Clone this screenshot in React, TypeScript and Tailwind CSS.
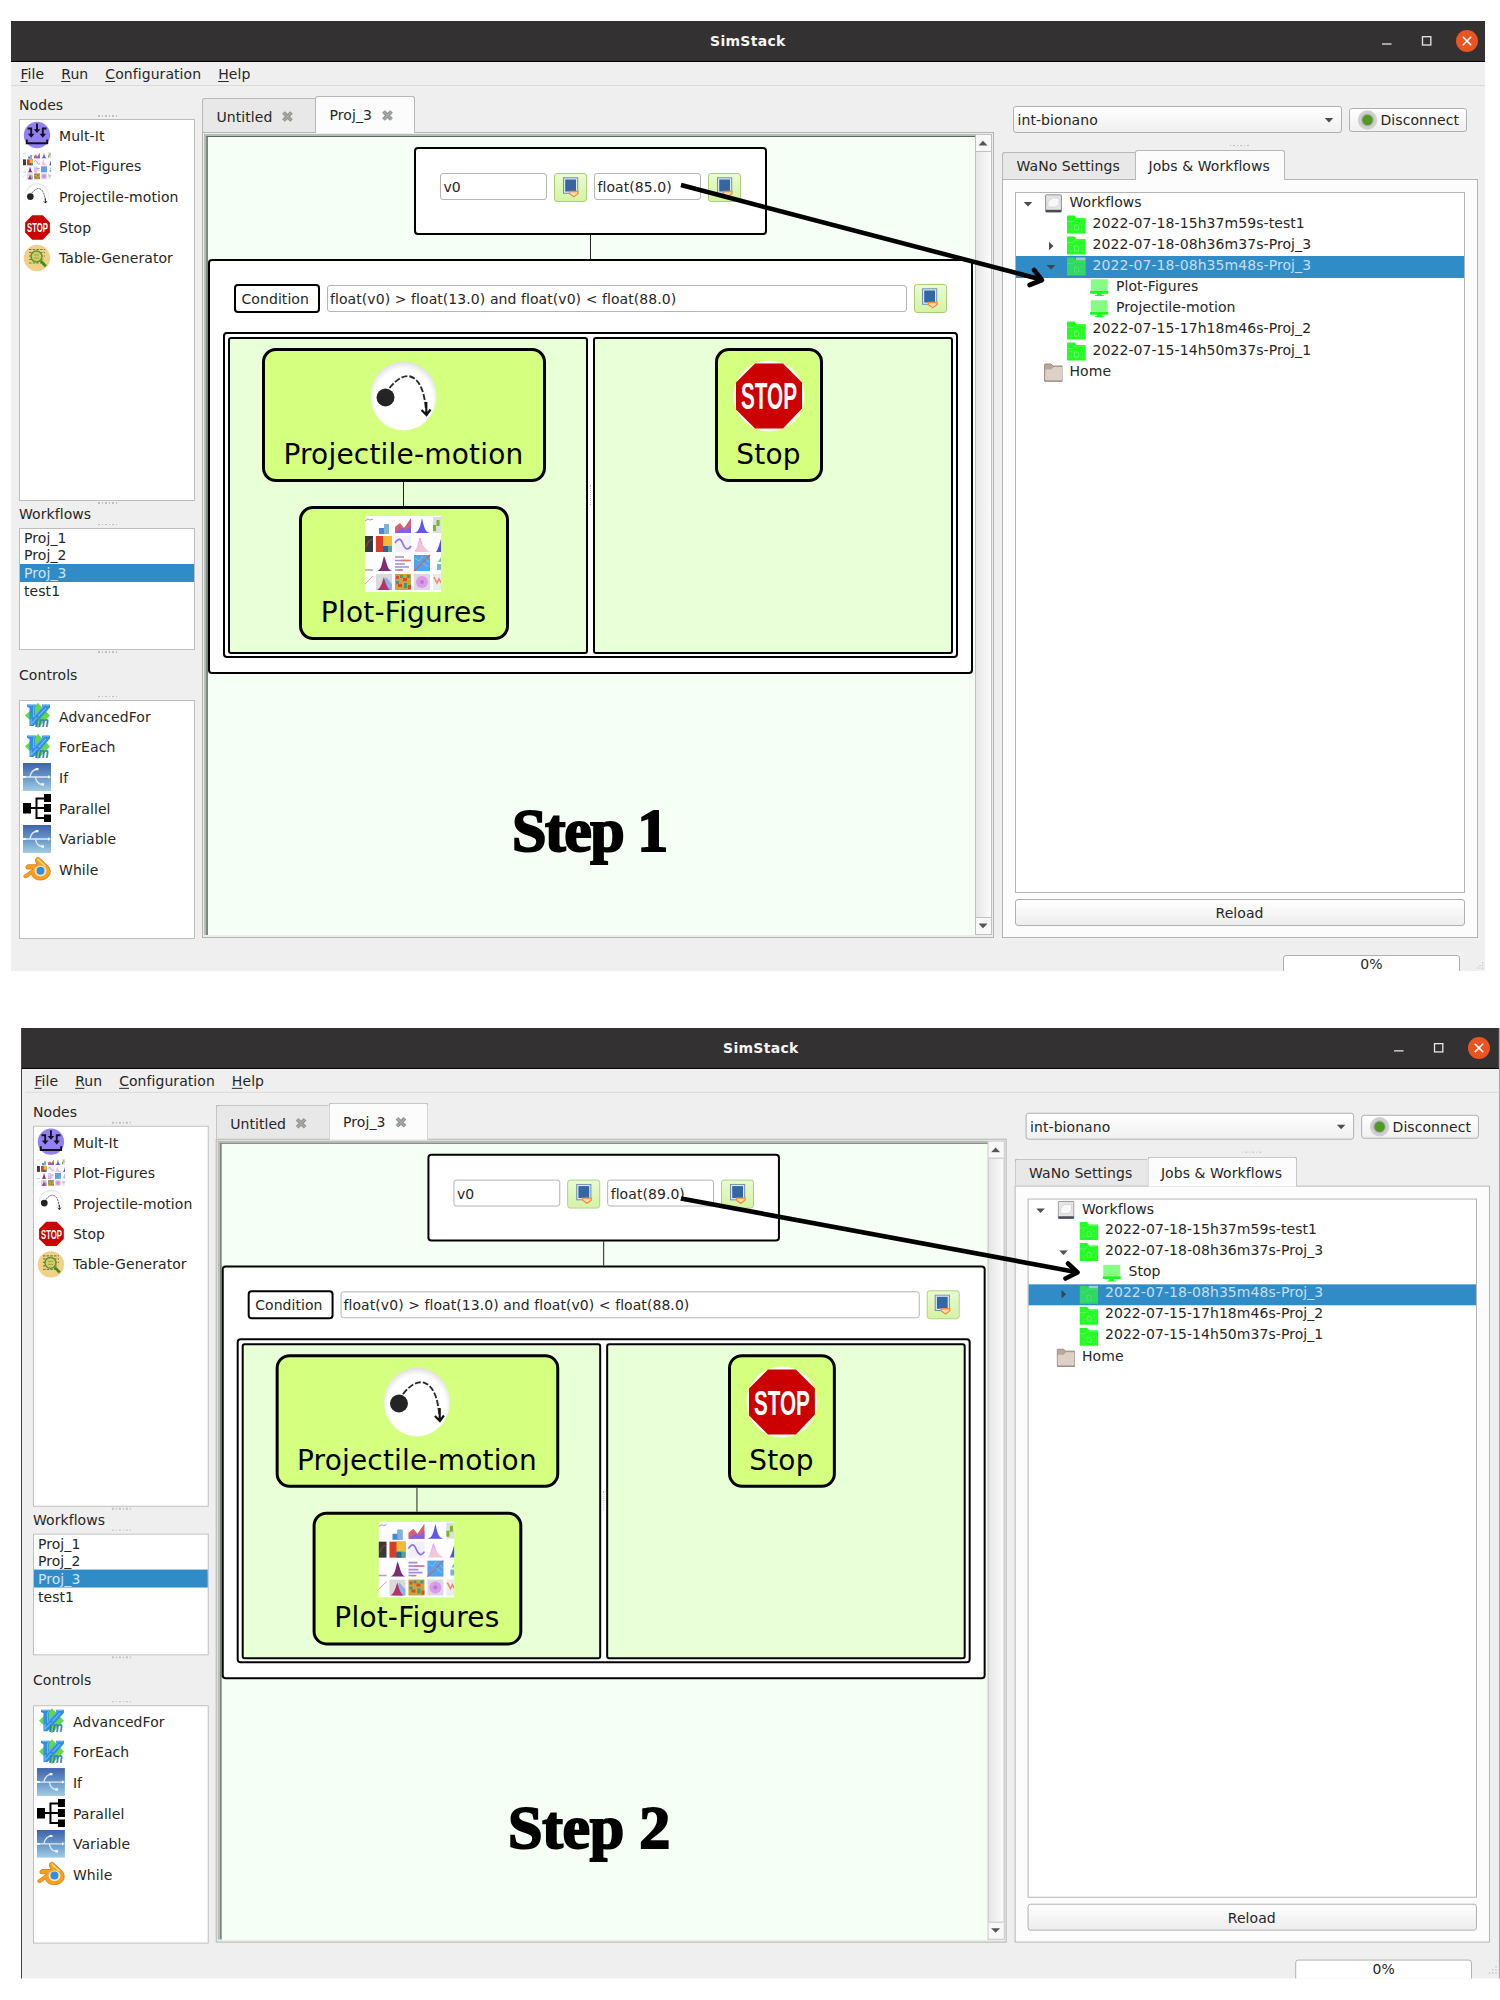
import React from "react";

/* ---------- icons ---------- */

function MultItIcon() {
  return (
    <svg className="size-[28px]" viewBox="0 0 28 28" fill="none">
      <circle cx="14" cy="14" r="13.2" fill="#9381f4" />
      <path d="M14 2.500V9M8.200 14V7.500H4.500M19.800 14V7.500H23.500" stroke="#15121f" strokeWidth="1.900" />
      <path d="M10.700 8.200h6.600L14 12zM4.900 12.800h6.600L8.200 16.800zM16.500 12.800h6.600l-3.300 4z" fill="#15121f" />
      <path d="M3.800 18.500V22.300H24.200V18.500" stroke="#15121f" strokeWidth="2" />
    </svg>
  );
}

function PlotIcon({ className }: { className: string }) {
  return (
    <svg className={className} viewBox="0 0 76 76">
      <rect width="76" height="76" fill="#fdfdff" />
      <path d="M0 5l3-2 2 1 3-1" stroke="#9aa0b0" fill="none" />
      <path d="M14 18V12h5V8h5v10z" fill="#4a87d8" />
      <path d="M19 8h5v10h-5z" fill="#7fb2df" />
      <path d="M30 17v-6l5-4 4 5 7-10v15z" fill="#d8606e" />
      <path d="M30 17l7-5 4 2 5-5v8z" fill="#7c62ee" />
      <path d="M49 17c5-1 6-6 8-15 2 9 3 14 8 15z" fill="#5f58ee" />
      <rect x="68" y="1" width="8" height="16" fill="#dcdedc" />
      <path d="M68 9h3v6h-3zM71.500 4h3v6h-3z" fill="#76b62c" />
      <rect y="20" width="8" height="16" fill="#3a3838" />
      <path d="M1 31l3-6 4-2" stroke="#a04040" fill="none" />
      <rect x="11" y="20" width="16" height="16" fill="#d83c28" />
      <rect x="18" y="20" width="9" height="11" fill="#efba36" />
      <rect x="18" y="30" width="5" height="6" fill="#1b6c94" />
      <rect x="23" y="30" width="4" height="6" fill="#55a58a" />
      <rect x="30" y="20" width="16" height="16" fill="#f1f1f9" />
      <path d="M30 27c4-6 6-4 8 1s5 7 8 2" stroke="#9474e4" strokeWidth="1.700" fill="none" />
      <path d="M49 36c4-1 4-6 6-14 2 6 4 10 10 14z" fill="#f4c5d8" />
      <path d="M50 35c3-2 3-7 5-13l2 6" stroke="#e9a0f0" fill="none" />
      <path d="M71 36c2-2 3-7 5-13v13z" fill="#4d52dc" />
      <path d="M0 54h8" stroke="#a5a9a9" strokeWidth="1.500" />
      <path d="M12 55c5-1 5-9 7-15 3 6 3 14 8 15z" fill="#7e2d72" />
      <path d="M30 41h9M30 44.500h16M30 48h10M30 51h14M30 54h7" stroke="#a68bd8" strokeWidth="1.600" />
      <path d="M36 44.500h8M33 54h5" stroke="#d77" strokeWidth="1.300" />
      <rect x="49" y="39" width="16" height="16" fill="#52a3ec" />
      <path d="M50 42l4 3 4-5M52 52l5-6 6 5M60 42l4 4" stroke="#7cc3f4" fill="none" />
      <path d="M49 55l16-16" stroke="#b86a70" strokeWidth="1.200" />
      <path d="M72 48h4v6h-4z" fill="#7bb4cc" />
      <path d="M73 46l3-5v5z" fill="#6fcf90" />
      <path d="M0 68l8-8" stroke="#ec9aa8" fill="none" />
      <rect x="11" y="58" width="16" height="16" fill="#dadada" />
      <path d="M15 74l6-13 6 7v6z" fill="#8fb2e8" />
      <path d="M12 74c5-3 5-9 7-13 1 5 3 11 6 13z" fill="#b23468" />
      <rect x="30" y="58" width="16" height="16" fill="#c9a53c" />
      <path d="M31 60h3v3h-3zM38 62h4v3h-4zM33 68h4v3h-4zM43 69h3v4h-3z" fill="#dd4a2a" />
      <path d="M35 59h3v3h-3zM42 59h3v3h-3zM31 65h3v3h-3zM39 67h3v5h-3z" fill="#3a9a8a" />
      <rect x="49" y="58" width="16" height="16" fill="#ddd8e0" />
      <circle cx="57" cy="66" r="6" fill="#dc98ec" />
      <circle cx="57" cy="66" r="2" fill="#b77cc4" />
      <rect x="68" y="58" width="8" height="16" fill="#ececec" />
      <path d="M69 61l3 6 2-4 2 4" stroke="#ee8870" strokeWidth="1.500" fill="none" />
    </svg>
  );
}

function ProjectileIcon({ className }: { className: string }) {
  return (
    <svg className={className} viewBox="0 0 66 70" fill="none">
      <defs>
        <radialGradient id="disc" cx=".5" cy=".55" r=".55">
          <stop offset=".8" stopColor="#fff" />
          <stop offset="1" stopColor="#dedede" />
        </radialGradient>
      </defs>
      <ellipse cx="33" cy="35" rx="33" ry="34.500" fill="url(#disc)" />
      <circle cx="15" cy="36.500" r="9" fill="#242424" />
      <path d="M19 27C27 17 34 14 40 15.500C50 19 54 32 55.500 49" stroke="#2b2b2b" strokeWidth="1.900" strokeDasharray="6 2" />
      <path d="M55.800 41v13M51 49l5 5 4-5.500" stroke="#141414" strokeWidth="2.200" />
    </svg>
  );
}

function StopIcon({ className }: { className: string }) {
  return (
    <svg className={"overflow-visible " + className} viewBox="0 0 72 72">
      <circle cx="36" cy="36" r="35.500" fill="#fbfbf6" />
      <path d="M22 3.500h28l19 19v26L50 68.500H22L3 49.500V22.500z" fill="#cc0000" />
      <text x="8" y="49" fontSize="36" fontWeight="700" letterSpacing="0" fontFamily="'Liberation Sans', sans-serif" fill="#fff" textLength="56" lengthAdjust="spacingAndGlyphs">
        STOP
      </text>
    </svg>
  );
}

function TableIcon() {
  return (
    <svg className="size-[28px]" viewBox="0 0 28 28" fill="none">
      <circle cx="14" cy="14" r="13.200" fill="#f0d287" />
      <path d="M6 5.500h16M6 8.500h16M6 12h16M6 15.500h15M6 19h12" stroke="#7b7848" strokeWidth="1.200" strokeDasharray="2.500 1.200" />
      <circle cx="13.500" cy="12.500" r="5.500" fill="#cdd06a" stroke="#5e962c" strokeWidth="1.500" />
      <path d="M11 11h5M11 14h5" stroke="#a79d40" />
      <path d="M17.800 17l5 5.200" stroke="#3f8a22" strokeWidth="2.800" />
    </svg>
  );
}

function VimIcon() {
  return (
    <svg className="size-[28px]" viewBox="0 0 28 28">
      <path d="M15 1l12 12.500L15 26 2 13.500z" fill="#63d94a" />
      <path d="M4 2.500h9v2l-1.200.8V13L19 5.300V2.500h8v3L10.500 24H6.500V6L4 4.800z" fill="#2f8fe4" />
      <path d="M5 3.200h7v1l-1.500 1v10L20 5V3.200h6" stroke="#7cc0f5" fill="none" strokeWidth=".8" />
      <path d="M8 17v5l3-3L23 6" stroke="#6cbaf4" fill="none" strokeWidth="1.200" />
      <text x="12" y="24.500" fontSize="14" fontWeight="700" fontStyle="italic" fontFamily="'Liberation Sans', sans-serif" fill="#3d7fb4" textLength="14" lengthAdjust="spacingAndGlyphs">
        im
      </text>
    </svg>
  );
}

function UsbIcon() {
  return (
    <svg className="size-[28px]" viewBox="0 0 28 28" fill="none">
      <defs>
        <linearGradient id="usb" x1="0" y1="0" x2="0" y2="1">
          <stop offset="0" stopColor="#3f63ab" />
          <stop offset=".55" stopColor="#6d9ccb" />
          <stop offset="1" stopColor="#a3cbe4" />
        </linearGradient>
      </defs>
      <rect width="28" height="28" fill="url(#usb)" />
      <path d="M0 14h26M7 13.500C8 9 10 6.500 14.500 6M12.500 14.500c1 5 3 7 7 7" stroke="#dfe9f4" strokeWidth="1.300" />
      <path d="M25 12.200l3 1.800-3 1.800zM0 13h3v2H0zM12.500 5h3v2.200h-3zM18.500 20.200h2.500v2.500h-2.500z" fill="#f1f6fa" />
    </svg>
  );
}

function ParallelIcon() {
  return (
    <svg className="size-[28px]" viewBox="0 0 28 28" fill="none">
      <path d="M4 14h18M22 4.500H13.500V24H22" stroke="#000" strokeWidth="2" />
      <path d="M0 9h8v10.500H0zM21 0h7.500v8H21zM21 10h7.500v8H21zM21 20.500h7.500v8H21z" fill="#000" />
    </svg>
  );
}

function BlenderIcon() {
  return (
    <svg className="size-[28px]" viewBox="0 0 28 28" fill="none">
      <path d="M1 20.500L10 14H3.500c-1.500-2 0-4 1.500-4.300H14L12.500 6c-.5-3 2-4.500 4-3l8.500 8c4.500 5 2.500 13-7 14-6 0-8.500-2.500-9.500-6L4 22.500C2 23.500 0 22 1 20.500z" fill="#f5a01e" stroke="#d47c10" strokeWidth=".8" />
      <path d="M14.500 4l8 7.500" stroke="#fddc8c" strokeWidth="1.500" />
      <ellipse cx="17.500" cy="16" rx="6" ry="5.400" fill="#fbe3b8" />
      <circle cx="17.500" cy="15.800" r="4" fill="#2f8fe0" />
    </svg>
  );
}

function CloseX() {
  return (
    <svg className="size-[13px]" viewBox="0 0 13 13">
      <path d="M2.500 2.500l8 8M10.500 2.500l-8 8" stroke="#8f928d" strokeWidth="3.800" />
      <path d="M3 3l7 7M10 3l-7 7" stroke="#a9aca7" strokeWidth="1.200" strokeLinecap="round" />
    </svg>
  );
}

function DiskIcon() {
  return (
    <svg className="h-[19px] w-[17px]" viewBox="0 0 17 19">
      <rect x=".6" y=".8" width="15.800" height="17" rx="1" fill="#e4e4e4" stroke="#8f8f8f" strokeWidth="1" />
      <path d="M3 13V8l4-4h7v6l-3 3z" fill="#f8f8f8" stroke="#cfcfcf" strokeWidth=".7" />
      <path d="M.8 15.800h15.500v2.500H.8z" fill="#4b4b58" />
    </svg>
  );
}

function GreenFolder({ dim }: { dim?: boolean }) {
  return (
    <svg className="h-[19px] w-[19px]" viewBox="0 0 19 19" fill="none">
      {dim && <path d="M9 .5h9.500v3H9z" fill="#9fc6e2" />}
      <path d="M0 1.500Q0 .5 1 .5h6.500L9.500 3H18q.7 0 .7.800V18.500H0z" fill={dim ? "#2fd860" : "#25fb25"} />
      <path d="M.5 6.500H6l2.500-2.500H18" stroke={dim ? "#4cdc74" : "#5cff5c"} strokeWidth=".9" />
      <path d="M7.500 10h3l1.200 1.600V15H7.500zM4 8.500v1M14.500 9v1M3.500 15h1M14.500 15h1" stroke={dim ? "#5ce083" : "#7dff7d"} strokeWidth=".8" />
    </svg>
  );
}

function HomeFolder() {
  return (
    <svg className="h-[19px] w-[19px]" viewBox="0 0 19 19">
      <path d="M.6 18V1.800Q.6 1 1.500 1H7l2 2h9v15z" fill="#bca79a" stroke="#99887d" strokeWidth="1" />
      <path d="M1.200 6.500h6L9.500 4H18v13.500H1.200z" fill="#ddd1c7" />
      <path d="M.6 18.200h17.800" stroke="#99887d" />
    </svg>
  );
}

function ScreenIcon() {
  return (
    <svg className="h-[18px] w-[18.500px]" viewBox="0 0 19 18">
      <rect x=".8" width="17.400" height="12" fill="#84ff84" />
      <path d="M.2 12h18.600v2.800H.2zM7 14.800h5v1.500h2v1H5v-1h2z" fill="#1cf81c" />
    </svg>
  );
}

function Arrow({ open }: { open: boolean }) {
  return (
    <svg className="size-[10px]" viewBox="0 0 10 10">
      {open ? <path d="M.7 3h8.600L5 7.600z" fill="#3b3b3b" fillOpacity=".9" /> : <path d="M3 .7v8.600L7.500 5z" fill="#3b3b3b" fillOpacity=".9" />}
    </svg>
  );
}

function PickButton() {
  return (
    <div className="flex h-[29px] w-[33px] shrink-0 items-center justify-center rounded-[3px] border border-[#a9cf7c] bg-linear-to-b from-[#e9fbd0] to-[#d3f4a2]">
      <svg className="h-[21px] w-[18px]" viewBox="0 0 18 21">
        <rect x="1.500" y=".8" width="14.200" height="15.500" fill="#dfe9f0" stroke="#6f8fb4" />
        <rect x="3.200" y="2.500" width="10.800" height="12" fill="#3465a4" />
        <path d="M7.500 14.500h8.500v2.200L11.800 19.800 7.500 16.700z" fill="#fbd9b0" stroke="#f08f3c" strokeWidth="1.300" />
      </svg>
    </div>
  );
}

function Dots() {
  return (
    <div className="flex gap-[2px]">
      {[0, 1, 2, 3, 4, 5].map((i) => (
        <span key={i} className="size-[1.500px] bg-[#c0c0c0]" />
      ))}
    </div>
  );
}

/* ---------- left column ---------- */

const nodes = [
  { label: "Mult-It", icon: <MultItIcon /> },
  { label: "Plot-Figures", icon: <PlotIcon className="size-[28px]" /> },
  { label: "Projectile-motion", icon: <ProjectileIcon className="h-[26px] w-[26px]" /> },
  { label: "Stop", icon: <StopIcon className="size-[27px]" /> },
  { label: "Table-Generator", icon: <TableIcon /> },
];

const controls = [
  { label: "AdvancedFor", icon: <VimIcon /> },
  { label: "ForEach", icon: <VimIcon /> },
  { label: "If", icon: <UsbIcon /> },
  { label: "Parallel", icon: <ParallelIcon /> },
  { label: "Variable", icon: <UsbIcon /> },
  { label: "While", icon: <BlenderIcon /> },
];

function IconList({ items }: { items: { label: string; icon: React.ReactNode }[] }) {
  return (
    <>
      {items.map((it) => (
        <div key={it.label} className="flex h-[30.600px] items-center pl-[3px]">
          <span className="flex w-[28px] justify-center">{it.icon}</span>
          <span className="pt-px pl-[8px]">{it.label}</span>
        </div>
      ))}
    </>
  );
}

function LeftColumn() {
  return (
    <div className="ml-[8px] flex w-[176px] shrink-0 flex-col">
      <div className="flex h-[33px] flex-col">
        <div className="flex h-[29px] items-center pt-[9px]">Nodes</div>
        <div className="ml-[79px]">
          <Dots />
        </div>
      </div>
      <div className="h-[382px] border border-[#bdbdbd] bg-white">
        <IconList items={nodes} />
      </div>
      <div className="flex h-[27px] flex-col justify-between pt-px pb-[3px]">
        <div className="ml-[79px]">
          <Dots />
        </div>
        <div>Workflows</div>
        <div className="ml-[79px]">
          <Dots />
        </div>
      </div>
      <div className="h-[122px] border border-[#bdbdbd] bg-white">
        {["Proj_1", "Proj_2", "Proj_3", "test1"].map((w) => (
          <div key={w} className={"flex h-[17.600px] items-center pl-[4px] " + (w === "Proj_3" ? "bg-[#308cc6] text-[#cfe4f2]" : "")}>
            {w}
          </div>
        ))}
      </div>
      <div className="flex h-[50px] flex-col justify-between pt-px pb-[3px]">
        <div className="ml-[79px]">
          <Dots />
        </div>
        <div className="pt-[2px]">Controls</div>
        <div className="ml-[79px]">
          <Dots />
        </div>
      </div>
      <div className="h-[239px] border border-[#bdbdbd] bg-white">
        <IconList items={controls} />
      </div>
    </div>
  );
}

/* ---------- workflow editor ---------- */

function Field({ text, className }: { text: string; className: string }) {
  return <div className={"flex h-[27px] shrink-0 items-center rounded-[3px] border border-[#b4b4b4] bg-white pl-[2.500px] " + className}>{text}</div>;
}

function Card({ label, icon, className }: { label: string; icon: React.ReactNode; className: string }) {
  return (
    <div className={"flex h-[134px] flex-col items-center rounded-[14px] border-[3px] border-black bg-[#d5ff7f] " + className}>
      <div className="flex h-[88px] items-end justify-center">{icon}</div>
      <div className="text-[28px] leading-[32px] tracking-[0.2px] whitespace-nowrap text-black">{label}</div>
    </div>
  );
}

function Editor({ value }: { value: string }) {
  return (
    <div className="flex w-[792px] shrink-0 flex-col pt-[9px]">
      <div className="flex h-[37px] items-end">
        <div className="flex h-[34px] w-[113px] items-center gap-[9px] rounded-tl-[3px] border-t border-l border-[#b8b8b8] bg-[#e8e8e8] pt-[2px] pl-[14px]">
          Untitled <CloseX />
        </div>
        <div className="z-10 -mb-px flex h-[37px] w-[100px] items-center gap-[9px] rounded-t-[3px] border border-b-0 border-[#b8b8b8] bg-[#fcfcfc] pl-[14px]">
          Proj_3 <CloseX />
        </div>
      </div>
      <div className="flex h-[806px] border border-[#b4b4b4] bg-[#ededed] pt-px pb-[2px] pl-px">
        <div className="flex w-[771px] border-t-2 border-l-2 border-[#b9bdb9]">
          <div className="flex w-[769px] flex-col border-t border-l-2 border-t-[#5d665e] border-l-[#7d877e] bg-[#f5fff5] pt-[10px]">
            <div className="ml-[206px] flex h-[88px] w-[353px] rounded-[4px] border-[2.500px] border-black bg-white pt-[24px] pl-[24.500px]">
              <Field text="v0" className="w-[107px]" />
              <div className="ml-[7px]">
                <PickButton />
              </div>
              <Field text={value} className="ml-[7px] w-[107px]" />
              <div className="ml-[7px]">
                <PickButton />
              </div>
            </div>
            <div className="ml-[382.500px] h-[24px] w-px bg-[#222]" />
            <div className="h-[415px] w-[765px] rounded-[4px] border-2 border-black bg-white">
              <div className="mt-[23px] ml-[24px] flex h-[29px] items-center">
                <div className="flex h-[29px] w-[86px] items-center rounded-[4px] border-2 border-black pl-[6px]">Condition</div>
                <Field text="float(v0) > float(13.0) and float(v0) < float(88.0)" className="ml-[7px] w-[580px]" />
                <div className="ml-[7px]">
                  <PickButton />
                </div>
              </div>
              <div className="mt-[19px] ml-[13px] flex h-[326px] w-[735px] rounded-[4px] border-2 border-black bg-white p-[3px]">
                <div className="h-[317px] w-[360px] rounded-[3px] border-2 border-black bg-[#e9ffd7] pt-[9px]">
                  <Card label="Projectile-motion" className="ml-[32px] w-[284px]" icon={<ProjectileIcon className="mr-px mb-[8px] h-[70px] w-[67px]" />} />
                  <div className="ml-[173px] h-[24px] w-px bg-[#222]" />
                  <Card label="Plot-Figures" className="ml-[69px] w-[210px]" icon={<PlotIcon className="mr-px mb-[5px] size-[76px]" />} />
                </div>
                <div className="flex w-[5px] items-center justify-center">
                  <div className="h-[20px] w-px border-l border-dotted border-[#bbb]" />
                </div>
                <div className="h-[317px] w-[360px] rounded-[3px] border-2 border-black bg-[#e9ffd7] pt-[9px]">
                  <Card label="Stop" className="ml-[120px] w-[108px]" icon={<StopIcon className="mb-[7px] size-[72px]" />} />
                </div>
              </div>
            </div>
          </div>
        </div>
        <div className="flex w-[17px] flex-col justify-between border border-[#c0c0c0] bg-linear-to-r from-[#e6e6e6] to-[#fbfbfb]">
          <div className="flex h-[17px] items-center justify-center border-b border-[#c0c0c0] bg-[#f8f8f8]">
            <svg className="h-[6px] w-[10px]" viewBox="0 0 10 6">
              <path d="M.5 5.500h9L5 .8z" fill="#555" />
            </svg>
          </div>
          <div className="flex h-[17px] items-center justify-center border-t border-[#c0c0c0] bg-[#f8f8f8]">
            <svg className="h-[6px] w-[10px]" viewBox="0 0 10 6">
              <path d="M.5 .5h9L5 5.200z" fill="#555" />
            </svg>
          </div>
        </div>
      </div>
    </div>
  );
}

/* ---------- right column ---------- */

type Row = { label: string; level: 0 | 1 | 2; kind: "disk" | "folder" | "screen" | "home"; arrow?: "open" | "closed"; selected?: boolean };

const indent = { 0: "pl-[7px]", 1: "pl-[30px]", 2: "pl-[53.500px]" };

function Tree({ rows }: { rows: Row[] }) {
  return (
    <div className="h-[701px] border border-[#b4b4b4] bg-white">
      {rows.map((r) => (
        <div key={r.label} className={"flex h-[21.150px] items-center " + indent[r.level] + (r.selected ? " bg-[#308cc6] text-[#c4def0]" : "")}>
          <span className="flex w-[10px]">{r.arrow && <Arrow open={r.arrow === "open"} />}</span>
          <span className="ml-[11px] flex w-[19px] justify-center">
            {r.kind === "disk" && <DiskIcon />}
            {r.kind === "folder" && <GreenFolder dim={r.selected} />}
            {r.kind === "screen" && <ScreenIcon />}
            {r.kind === "home" && <HomeFolder />}
          </span>
          <span className="-mt-[4px] ml-[7px] whitespace-nowrap">{r.label}</span>
        </div>
      ))}
    </div>
  );
}

function RightColumn({ rows }: { rows: Row[] }) {
  return (
    <div className="ml-[8px] flex w-[476px] shrink-0 flex-col">
      <div className="mt-[20px] ml-[11px] flex h-[27px] items-center">
        <div className="flex h-[27px] w-[329px] items-center justify-between rounded-[3px] border border-[#b0b0b0] bg-linear-to-b from-white to-[#f0f0f0] pr-[7px] pl-[4px]">
          int-bionano
          <Arrow open />
        </div>
        <div className="ml-[7px] flex h-[24px] w-[118px] items-center rounded-[3px] border border-[#b0b0b0] bg-linear-to-b from-white to-[#f0f0f0] pl-[7px]">
          <svg className="h-[20px] w-[21px]" viewBox="0 0 21 20">
            <circle cx="10.500" cy="10" r="9.700" fill="#cfcfcf" />
            <circle cx="10.500" cy="10" r="6.500" fill="#b3b3b0" />
            <circle cx="10.500" cy="10" r="5.200" fill="#4f9a24" />
          </svg>
          <span className="pl-[3px]">Disconnect</span>
        </div>
      </div>
      <div className="flex h-[17px] items-end pb-[4px] pl-[228px]">
        <Dots />
      </div>
      <div className="flex h-[29px] items-end">
        <div className="flex h-[27px] w-[133px] items-center rounded-tl-[3px] border-t border-l border-[#b8b8b8] bg-[#e8e8e8] pl-[14px]">WaNo Settings</div>
        <div className="z-10 -mb-px flex h-[30px] w-[150px] items-center rounded-t-[3px] border border-b-0 border-[#b8b8b8] bg-[#fcfcfc] pl-[13px]">Jobs &amp; Workflows</div>
      </div>
      <div className="h-[759px] border border-[#b4b4b4] bg-[#fcfcfc] pt-[12px] pr-[12px] pl-[12px]">
        <Tree rows={rows} />
        <div className="mt-[6px] flex h-[27px] items-center justify-center rounded-[3px] border border-[#b0b0b0] bg-linear-to-b from-white to-[#ededed]">Reload</div>
      </div>
    </div>
  );
}

/* ---------- window ---------- */

function AppWindow({ value, rows, className }: { value: string; rows: Row[]; className: string }) {
  return (
    <div className={"relative flex flex-col overflow-hidden bg-[#efefef] font-['DejaVu_Sans','Liberation_Sans',sans-serif] text-[14px] leading-[16px] tracking-[0.07px] text-[#262626] " + className}>
      <div className="-ml-[3px] flex h-[41px] shrink-0 items-center border-b border-black bg-[#333132] pl-[3px]">
        <div className="flex w-[1474px] shrink-0 items-center pb-px pl-[699px] font-bold tracking-[0.3px] text-[#f4f4f4]">
          <span className="w-[76px] whitespace-nowrap">SimStack</span>
          <svg className="ml-[595px] h-[24px] w-[90px] shrink-0" viewBox="0 0 90 24" fill="none">
            <path d="M1 15h9.500" stroke="#e8e8e8" strokeWidth="1.300" />
            <rect x="41.500" y="7.700" width="8.300" height="8.300" stroke="#e8e8e8" strokeWidth="1.300" />
          </svg>
          <svg className="-ml-[16px] size-[24px] shrink-0" viewBox="0 0 24 24">
            <circle cx="12" cy="12" r="11" fill="#e95420" />
            <path d="M7.800 7.800l8.400 8.400M16.200 7.800l-8.400 8.400" stroke="#fff" strokeWidth="1.600" />
          </svg>
        </div>
      </div>
      <div className="flex h-[24px] shrink-0 items-center gap-[17px] border-b border-[#dadada] pl-[9.500px]">
        {["File", "Run", "Configuration", "Help"].map((m) => (
          <span key={m}>
            <span className="underline decoration-1 underline-offset-[2px]">{m[0]}</span>
            {m.slice(1)}
          </span>
        ))}
      </div>
      <div className="flex shrink-0">
        <LeftColumn />
        <div className="ml-[6.500px]">
          <Editor value={value} />
        </div>
        <RightColumn rows={rows} />
      </div>
      <div className="mt-[16px] flex shrink-0">
        <div className="ml-[1272px] flex h-[24px] w-[177px] shrink-0 justify-center rounded-[3px] border border-[#b0b0b0] bg-white">0%</div>
        <svg className="mt-[5px] ml-[16px] size-[12px]" viewBox="0 0 12 12" fill="#c4c4c4">
          <path d="M8 1h1.500v1.500H8zM4.500 4.500H6V6H4.500zM8 4.500h1.500V6H8zM1 8h1.500v1.500H1zM4.500 8H6v1.500H4.500zM8 8h1.500v1.500H8z" />
        </svg>
      </div>
    </div>
  );
}

const rowsOne: Row[] = [
  { label: "Workflows", level: 0, kind: "disk", arrow: "open" },
  { label: "2022-07-18-15h37m59s-test1", level: 1, kind: "folder" },
  { label: "2022-07-18-08h36m37s-Proj_3", level: 1, kind: "folder", arrow: "closed" },
  { label: "2022-07-18-08h35m48s-Proj_3", level: 1, kind: "folder", arrow: "open", selected: true },
  { label: "Plot-Figures", level: 2, kind: "screen" },
  { label: "Projectile-motion", level: 2, kind: "screen" },
  { label: "2022-07-15-17h18m46s-Proj_2", level: 1, kind: "folder" },
  { label: "2022-07-15-14h50m37s-Proj_1", level: 1, kind: "folder" },
  { label: "Home", level: 0, kind: "home" },
];

const rowsTwo: Row[] = [
  { label: "Workflows", level: 0, kind: "disk", arrow: "open" },
  { label: "2022-07-18-15h37m59s-test1", level: 1, kind: "folder" },
  { label: "2022-07-18-08h36m37s-Proj_3", level: 1, kind: "folder", arrow: "open" },
  { label: "Stop", level: 2, kind: "screen" },
  { label: "2022-07-18-08h35m48s-Proj_3", level: 1, kind: "folder", arrow: "closed", selected: true },
  { label: "2022-07-15-17h18m46s-Proj_2", level: 1, kind: "folder" },
  { label: "2022-07-15-14h50m37s-Proj_1", level: 1, kind: "folder" },
  { label: "Home", level: 0, kind: "home" },
];

function StepLabel({ text, className }: { text: string; className: string }) {
  return (
    <div className={"absolute font-['Liberation_Serif',serif] text-[62px] leading-[62px] font-bold whitespace-nowrap text-black [-webkit-text-stroke:2px_black] " + className}>
      {text}
    </div>
  );
}

export default function App() {
  return (
    <div className="relative h-[2000px] w-[1500px] overflow-hidden bg-white pt-[21px]">
      <AppWindow value="float(85.0)" rows={rowsOne} className="ml-[11px] h-[950px] w-[1474px]" />
      <div className="mt-[57px] h-[950px]">
        <AppWindow
          value="float(89.0)"
          rows={rowsTwo}
          className="ml-[21px] h-[952.500px] w-[1481px] origin-top-left scale-x-[0.9986] scale-y-[0.9974] border-r border-l border-r-[#a8a09c] border-l-[#5a3a2c] pl-[3px]"
        />
      </div>
      <StepLabel text="Step 1" className="top-[799px] left-[512px] tracking-[-1.500px]" />
      <StepLabel text="Step 2" className="top-[1796px] left-[508px] tracking-[-0.300px]" />
      <svg className="pointer-events-none absolute inset-0" width="1500" height="2000" fill="none" stroke="#000">
        <path d="M681 185L1041 279.500" strokeWidth="4.600" />
        <path d="M1034 270L1042 280L1029.500 285" strokeWidth="4.600" strokeLinecap="round" strokeLinejoin="round" />
        <path d="M681 1198.500L1076 1272" strokeWidth="4.600" />
        <path d="M1068 1263.500L1077.500 1272.500L1065.500 1278.500" strokeWidth="4.600" strokeLinecap="round" strokeLinejoin="round" />
      </svg>
    </div>
  );
}
